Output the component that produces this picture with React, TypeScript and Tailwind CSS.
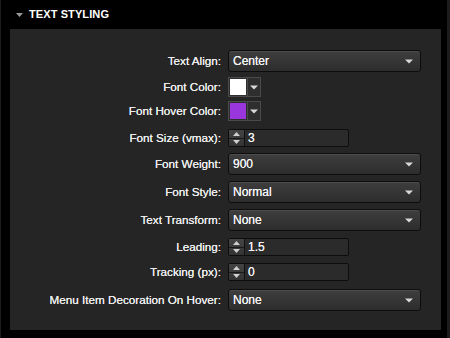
import { ReactNode } from "react";

type Row = {
  label: string;
  mt: string;
  control: ReactNode;
};

function Caret({ className = "" }: { className?: string }) {
  return (
    <svg width="8" height="5" viewBox="0 0 8 5" className={className}>
      <path d="M0 0.5 H8 L4 4.5 Z" fill="#d8d8d8" />
    </svg>
  );
}

function Select({ value }: { value: string }) {
  return (
    <div className="flex h-[22px] w-[193px] items-center justify-between rounded-[3px] border border-[#0d0d0d] bg-gradient-to-b from-[#3e3e3e] to-[#2d2d2d] pl-[4px] pr-[7px] shadow-[inset_0_1px_0_rgba(255,255,255,0.08)]">
      <span className="text-[12px] text-[#f2f2f2] [text-shadow:0_0_0.4px_#fff]">{value}</span>
      <Caret />
    </div>
  );
}

function Swatch({ color }: { color: string }) {
  return (
    <div className="flex h-[20px] w-[33px] border border-[#4a4a4a] bg-[#2e2e2e]">
      <div className="m-[1px] w-[16px]" style={{ background: color }} />
      <div className="flex flex-1 items-center justify-center border-l border-[#4a4a4a]">
        <Caret />
      </div>
    </div>
  );
}

function NumberInput({ value }: { value: string }) {
  return (
    <div className="flex h-[18px] w-[121px] rounded-[2px] border border-[#0d0d0d] bg-[#2b2b2b]">
      <div className="flex w-[16px] flex-col border-r border-[#111] bg-gradient-to-b from-[#444] to-[#333]">
        <div className="flex flex-1 items-center justify-center border-b border-[#1a1a1a]">
          <svg width="7" height="4" viewBox="0 0 7 4">
            <path d="M0 4 L3.5 0 L7 4 Z" fill="#cfcfcf" />
          </svg>
        </div>
        <div className="flex flex-1 items-center justify-center">
          <svg width="7" height="4" viewBox="0 0 7 4">
            <path d="M0 0 H7 L3.5 4 Z" fill="#cfcfcf" />
          </svg>
        </div>
      </div>
      <div className="flex items-center pl-[3px] text-[12px] text-[#f2f2f2] [text-shadow:0_0_0.4px_#fff]">{value}</div>
    </div>
  );
}

const rows: Row[] = [
  { label: "Text Align:", mt: "mt-0", control: <Select value="Center" /> },
  { label: "Font Color:", mt: "mt-[5px]", control: <Swatch color="#ffffff" /> },
  { label: "Font Hover Color:", mt: "mt-[4px]", control: <Swatch color="#9a36de" /> },
  { label: "Font Size (vmax):", mt: "mt-[8px]", control: <NumberInput value="3" /> },
  { label: "Font Weight:", mt: "mt-[6px]", control: <Select value="900" /> },
  { label: "Font Style:", mt: "mt-[6px]", control: <Select value="Normal" /> },
  { label: "Text Transform:", mt: "mt-[6px]", control: <Select value="None" /> },
  { label: "Leading:", mt: "mt-[7px]", control: <NumberInput value="1.5" /> },
  { label: "Tracking (px):", mt: "mt-[7px]", control: <NumberInput value="0" /> },
  { label: "Menu Item Decoration On Hover:", mt: "mt-[8px]", control: <Select value="None" /> },
];

export default function App() {
  return (
    <div
      className="flex h-[338px] w-[450px] flex-col border-l border-r-[3px] border-[#1c1c1c] bg-black"
      style={{ fontFamily: '"Liberation Sans", Arial, sans-serif' }}
    >
      <div className="flex h-[29px] items-center gap-[6px] pl-[15px]">
        <svg width="7" height="4" viewBox="0 0 7 4">
          <path d="M0 0 H7 L3.5 4 Z" fill="#9a9a9a" />
        </svg>
        <span className="text-[11px] font-bold tracking-[0.1px] text-white">TEXT STYLING</span>
      </div>
      <div className="ml-[9px] mr-[6px] flex flex-col bg-[#252525] pt-[21px] pb-[19px]">
        {rows.map((r) => (
          <div key={r.label} className={`flex items-center ${r.mt}`}>
            <div className="w-[211px] text-right text-[11.7px] text-[#ececec] [text-shadow:0_0_0.4px_#fff]">
              {r.label}
            </div>
            <div className="ml-[7px]">{r.control}</div>
          </div>
        ))}
      </div>
    </div>
  );
}
